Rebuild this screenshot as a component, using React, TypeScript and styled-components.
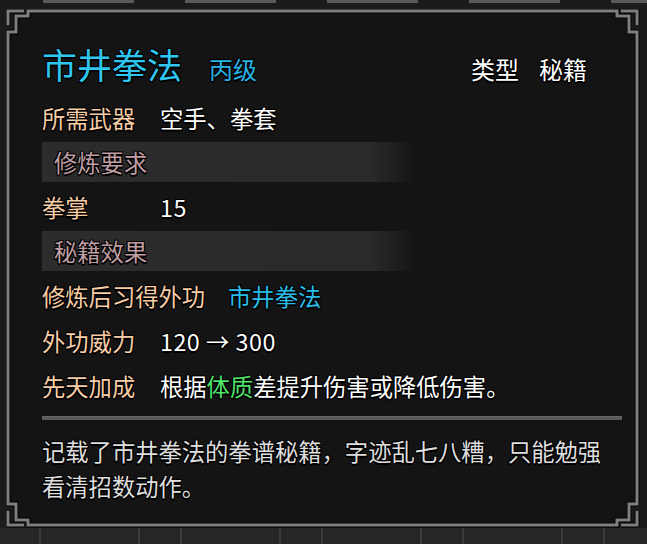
import React from 'react';
import styled, { createGlobalStyle } from 'styled-components';

const GlobalStyle = createGlobalStyle`
  html, body {
    margin: 0;
    padding: 0;
    background: #1c1c1c;
  }
  body {
    font-family: "Noto Sans CJK SC", "Noto Sans", sans-serif;
  }
`;

const outline = `1px 1px 0 #000, -1px -1px 0 #000, 1px -1px 0 #000, -1px 1px 0 #000, 0 2px 0 #000`;

const Stage = styled.div`
  width: 647px;
  height: 544px;
  display: grid;
  grid-template-rows: 9px 519px 16px;
  grid-template-columns: 6px 634px 7px;
  background: #1b1b1b;
  overflow: hidden;
`;

const TopStrip = styled.div`
  grid-column: 1 / -1;
  display: flex;
  align-items: flex-start;
  gap: 51px;
  padding-left: 43px;
  overflow: hidden;
`;

const Tab = styled.div`
  flex: 0 0 91px;
  height: 3px;
  background: #5a5a5a;
`;

const BottomStrip = styled.div`
  grid-column: 1 / -1;
  background-color: #262626;
  background-image: linear-gradient(
    90deg,
    transparent 39px,
    #3b3b3b 39px,
    #3b3b3b 41px,
    transparent 41px,
    transparent 138px,
    #3b3b3b 138px,
    #3b3b3b 140px,
    transparent 140px
  );
  background-size: 141px 100%;
  background-repeat: repeat-x;
`;

const Panel = styled.div`
  grid-row: 2;
  grid-column: 2;
  position: relative;
  display: flex;
  flex-direction: column;
  padding: 37px 18px 0 36px;
  font-size: 23.3px;
  text-shadow: ${outline};
`;

const FrameSvg = styled.svg`
  position: absolute;
  inset: 0;
  pointer-events: none;
`;

const Content = styled.div`
  position: relative;
  display: flex;
  flex-direction: column;
`;

const Header = styled.div`
  display: flex;
  align-items: baseline;
  line-height: 1;
  height: 35px;
  margin-bottom: 14px;
`;

const Title = styled.span`
  font-size: 35px;
  color: #2fc6f1;
`;

const Grade = styled.span`
  font-size: 24px;
  color: #2ab3e4;
  margin-left: 27px;
`;

const TypeGroup = styled.div`
  margin-left: auto;
  margin-right: 35px;
  display: flex;
  gap: 20px;
  font-size: 24px;
  color: #ffffff;
`;

const InfoRow = styled.div`
  display: flex;
  align-items: center;
  height: 45px;
  white-space: nowrap;
`;

const Label = styled.span`
  min-width: 95px;
  margin-right: 23px;
  color: #f7cda6;
`;

const Value = styled.span<{ $tone?: 'white' | 'cyan' }>`
  color: ${(p) => (p.$tone === 'cyan' ? '#2abde9' : '#ffffff')};
`;

const Num = styled.span`
  letter-spacing: 0.5px;
`;

const Green = styled.span`
  color: #4fe46c;
`;

const SectionBar = styled.div`
  display: flex;
  align-items: center;
  height: 40px;
  margin: 2px 0;
  width: 374px;
  padding-left: 12px;
  box-sizing: border-box;
  background: linear-gradient(90deg, #2c2c2c 0%, #2a2a2a 88%, rgba(34, 34, 34, 0) 100%);
  color: #bf9ea3;
`;

const Separator = styled.div`
  margin-top: 8px;
  height: 4px;
  background: #5b5b5b;
  border-top: 1px solid #656565;
  box-sizing: border-box;
`;

const Description = styled.p`
  margin: 14px 0 0;
  line-height: 35px;
  color: #dedede;
`;

const W = 634;
const H = 519;

// stepped notch in each corner of the frame line
const framePath = () => {
  const L = 2;
  const T = 2;
  const R = W - 3;
  const B = H - 3;
  return [
    `M ${L + 20} ${T} L ${R - 20} ${T}`,
    `L ${R - 20} ${T + 5} L ${R - 8} ${T + 5} L ${R - 8} ${T + 21} L ${R} ${T + 21}`,
    `L ${R} ${B - 21} L ${R - 8} ${B - 21} L ${R - 8} ${B - 5} L ${R - 20} ${B - 5} L ${R - 20} ${B}`,
    `L ${L + 20} ${B} L ${L + 20} ${B - 5} L ${L + 8} ${B - 5} L ${L + 8} ${B - 21} L ${L} ${B - 21}`,
    `L ${L} ${T + 21} L ${L + 8} ${T + 21} L ${L + 8} ${T + 5} L ${L + 20} ${T + 5} Z`,
  ].join(' ');
};

const brackets = () => {
  const L = 2;
  const T = 2;
  const R = W - 3;
  const B = H - 3;
  return [
    `M ${R - 16} ${T} L ${R} ${T} L ${R} ${T + 14}`,
    `M ${R} ${B - 14} L ${R} ${B} L ${R - 16} ${B}`,
    `M ${L + 16} ${B} L ${L} ${B} L ${L} ${B - 14}`,
    `M ${L} ${T + 14} L ${L} ${T} L ${L + 16} ${T}`,
  ].join(' ');
};

const Frame = () => (
  <FrameSvg width={W} height={H} viewBox={`0 0 ${W} ${H}`}>
    <path d={framePath()} fill="#141414" stroke="#000" strokeWidth={5} />
    <path d={framePath()} fill="none" stroke="#7e7e7e" strokeWidth={3} />
    <path d={brackets()} fill="none" stroke="#000" strokeWidth={5} />
    <path d={brackets()} fill="none" stroke="#7e7e7e" strokeWidth={3} />
  </FrameSvg>
);

export default function App() {
  return (
    <>
      <GlobalStyle />
      <Stage>
        <TopStrip>
          <Tab />
          <Tab />
          <Tab />
          <Tab />
          <Tab />
        </TopStrip>
        <Panel>
          <Frame />
          <Content>
            <Header>
              <Title>市井拳法</Title>
              <Grade>丙级</Grade>
              <TypeGroup>
                <span>类型</span>
                <span>秘籍</span>
              </TypeGroup>
            </Header>
            <InfoRow>
              <Label>所需武器</Label>
              <Value>空手、拳套</Value>
            </InfoRow>
            <SectionBar>修炼要求</SectionBar>
            <InfoRow>
              <Label>拳掌</Label>
              <Value>
                <Num>15</Num>
              </Value>
            </InfoRow>
            <SectionBar>秘籍效果</SectionBar>
            <InfoRow>
              <Label>修炼后习得外功</Label>
              <Value $tone="cyan">市井拳法</Value>
            </InfoRow>
            <InfoRow>
              <Label>外功威力</Label>
              <Value>
                <Num>120 → 300</Num>
              </Value>
            </InfoRow>
            <InfoRow>
              <Label>先天加成</Label>
              <Value>
                根据<Green>体质</Green>差提升伤害或降低伤害。
              </Value>
            </InfoRow>
            <Separator />
            <Description>
              记载了市井拳法的拳谱秘籍，字迹乱七八糟，只能勉强看清招数动作。
            </Description>
          </Content>
        </Panel>
        <BottomStrip />
      </Stage>
    </>
  );
}
